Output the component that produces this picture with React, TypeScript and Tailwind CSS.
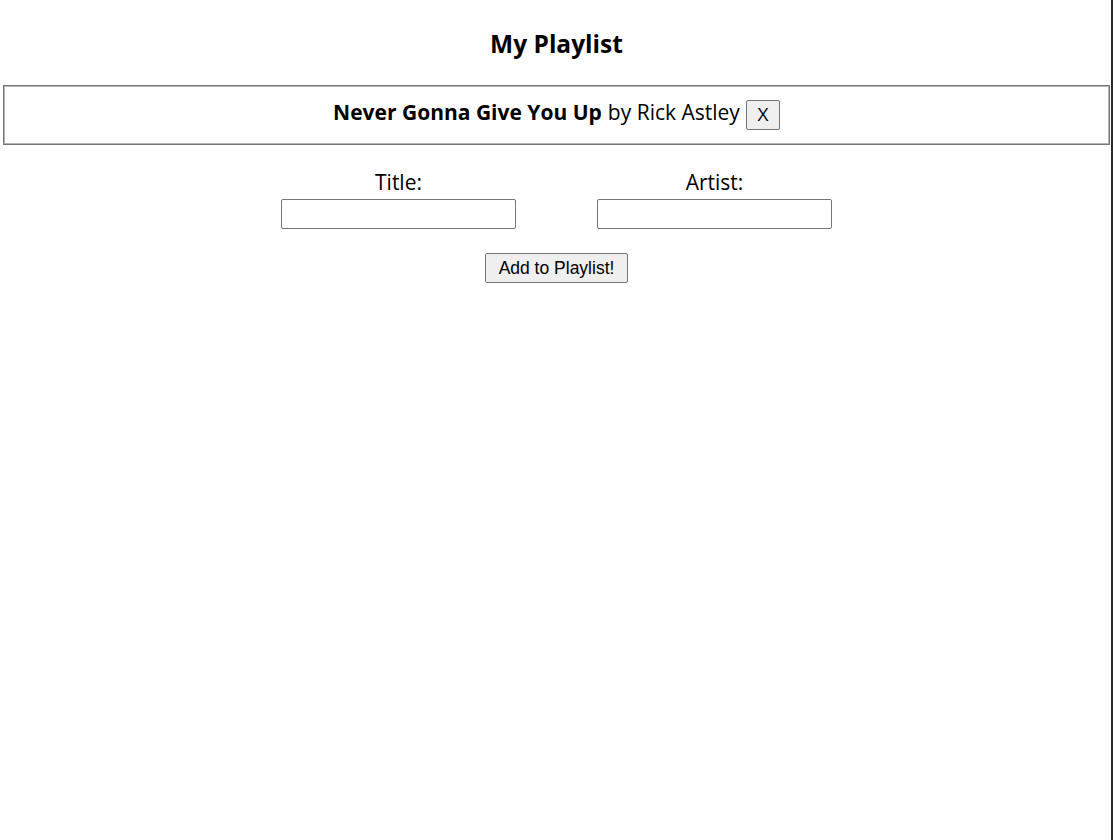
import { useState } from 'react';

type Song = { title: string; artist: string };

const font = { fontFamily: '"Open Sans", "Noto Sans", sans-serif' };

export default function App() {
  const [songs, setSongs] = useState<Song[]>([
    { title: 'Never Gonna Give You Up', artist: 'Rick Astley' },
  ]);
  const [title, setTitle] = useState('');
  const [artist, setArtist] = useState('');

  const addSong = () => {
    if (!title.trim() || !artist.trim()) return;
    setSongs([...songs, { title, artist }]);
    setTitle('');
    setArtist('');
  };

  return (
    <div
      className="min-h-screen border-r-2 border-[#2b2b2b] bg-white text-black"
      style={font}
    >
      <h2 className="pt-[28px] pl-[2px] text-center text-[24.5px] leading-[32px] font-bold">
        My Playlist
      </h2>

      <ul className="mt-[25px] ml-[3px] mr-px">
        {songs.map((song, i) => (
          <li
            key={i}
            className="flex h-[60px] items-center justify-center border border-[#767676] pb-[4px] text-[21px] shadow-[inset_0_0_0_1px_#b4b4b4]"
          >
            <span className="font-bold">{song.title}</span>
            <span className="ml-[6px]">by {song.artist}</span>
            <button
              onClick={() => setSongs(songs.filter((_, j) => j !== i))}
              className="mt-[3px] ml-[6px] h-[30px] w-[34px] rounded-[2px] border border-[#767676] bg-[#efefef] text-[19px] leading-none"
            >
              X
            </button>
          </li>
        ))}
      </ul>

      <div className="mt-[23px] flex justify-center gap-[81px] pl-[2px]">
        <label className="flex w-[235px] flex-col items-center text-[21px] leading-[28px]">
          Title:
          <input
            value={title}
            onChange={(e) => setTitle(e.target.value)}
            className="mt-[3px] h-[30px] w-[235px] rounded-[2px] border border-[#767676] px-1 text-sm"
          />
        </label>
        <label className="flex w-[235px] flex-col items-center text-[21px] leading-[28px]">
          Artist:
          <input
            value={artist}
            onChange={(e) => setArtist(e.target.value)}
            className="mt-[3px] h-[30px] w-[235px] rounded-[2px] border border-[#767676] px-1 text-sm"
          />
        </label>
      </div>

      <div className="mt-[24px] flex justify-center pl-[2px]">
        <button
          onClick={addSong}
          className="h-[30px] w-[143px] rounded-[2px] border border-[#767676] bg-[#efefef] text-[17.5px]"
          style={{ fontFamily: '"Liberation Sans", Arial, sans-serif' }}
        >
          Add to Playlist!
        </button>
      </div>
    </div>
  );
}
